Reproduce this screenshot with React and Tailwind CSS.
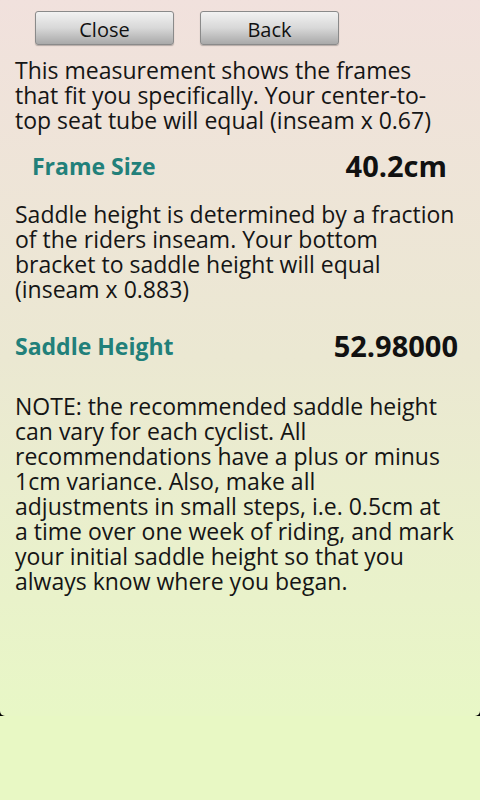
import React from 'react';

const font = { fontFamily: '"Open Sans", "DejaVu Sans", sans-serif' };

const Btn = ({ children }) => (
  <button className="w-[139px] h-[34px] pt-[3px] rounded-[3px] border border-[#8a8a8a] bg-gradient-to-b from-[#f2f2f2] via-[#d8d8d8] to-[#a9a9a9] text-[20px] leading-none text-[#111] shadow-[0_1px_1px_rgba(0,0,0,0.25)]">
    {children}
  </button>
);

const Para = ({ lines, className }) => (
  <p className={`pl-[15px] pr-[4px] text-[23px] leading-[25px] whitespace-nowrap ${className}`}>
    {lines.map((l, i) => (
      <React.Fragment key={i}>
        {l}
        {i < lines.length - 1 && <br />}
      </React.Fragment>
    ))}
  </p>
);

export default function App() {
  return (
    <div className="w-[480px] h-[800px] bg-[#e8f8c4] overflow-hidden text-[#151515]" style={font}>
      <div className="bg-black">
        <div className="h-[716px] rounded-b-[5px] bg-gradient-to-b from-[#f1e1dd] via-[#ebe8d2] to-[#e8f7c6]">
          <div className="flex gap-[26px] pl-[35px] pt-[11px]">
            <Btn>Close</Btn>
            <Btn>Back</Btn>
          </div>

          <Para
            className="mt-[13px]"
            lines={[
              'This measurement shows the frames',
              'that fit you specifically. Your center-to-',
              'top seat tube will equal (inseam x 0.67)',
            ]}
          />

          <div className="flex items-center justify-between pl-[32px] pr-[33px] mt-[18px]">
            <span className="text-[23px] leading-[25px] font-bold text-[#22807a]">Frame Size</span>
            <span className="text-[29px] leading-[30px] font-bold text-[#111]">40.2cm</span>
          </div>

          <Para
            className="mt-[21px]"
            lines={[
              'Saddle height is determined by a fraction',
              'of the riders inseam. Your bottom',
              'bracket to saddle height will equal',
              '(inseam x 0.883)',
            ]}
          />

          <div className="flex items-center justify-between pl-[15px] pr-[22px] mt-[29px]">
            <span className="text-[23px] leading-[25px] font-bold text-[#22807a]">Saddle Height</span>
            <span className="text-[29px] leading-[30px] font-bold text-[#111]">52.98000</span>
          </div>

          <Para
            className="mt-[33px]"
            lines={[
              'NOTE: the recommended saddle height',
              'can vary for each cyclist. All',
              'recommendations have a plus or minus',
              '1cm variance. Also, make all',
              'adjustments in small steps, i.e. 0.5cm at',
              'a time over one week of riding, and mark',
              'your initial saddle height so that you',
              'always know where you began.',
            ]}
          />
        </div>
      </div>
    </div>
  );
}
